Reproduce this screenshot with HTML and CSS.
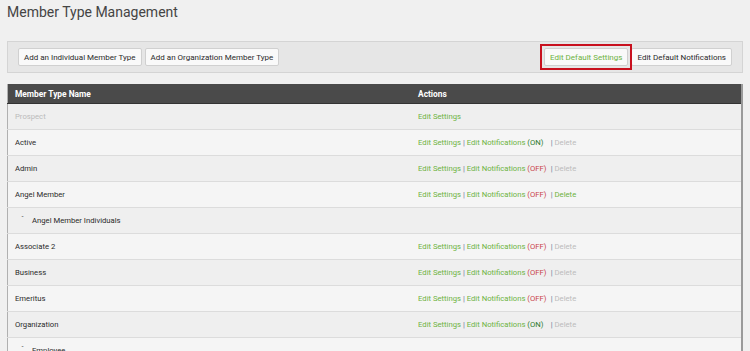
FILE: index.html
```html
<!DOCTYPE html>
<html lang="en">
<head>
    <meta charset="UTF-8">
    <meta name="viewport" content="width=device-width, initial-scale=1.0">
    <title>Member Type Management</title>
    <link rel="stylesheet" href="styles.css">
</head>
<body>
    <h1>Member Type Management</h1>
    <div class="toolbar">
        <div class="toolbar-left">
            <button class="btn">Add an Individual Member Type</button>
            <button class="btn">Add an Organization Member Type</button>
        </div>
        <div class="toolbar-right">
            <button class="btn btn-green highlight">Edit Default Settings</button>
            <button class="btn">Edit Default Notifications</button>
        </div>
    </div>

    <table class="types">
        <thead>
            <tr>
                <th class="col-name">Member Type Name</th>
                <th>Actions</th>
            </tr>
        </thead>
        <tbody>
            <tr>
                <td class="muted">Prospect</td>
                <td><a class="link">Edit Settings</a></td>
            </tr>
            <tr>
                <td>Active</td>
                <td><a class="link">Edit Settings</a> <span class="sep">|</span> <span class="notif"><a class="link">Edit Notifications</a> <span class="on">(ON)</span></span><span class="sep">|</span> <span class="disabled">Delete</span></td>
            </tr>
            <tr>
                <td>Admin</td>
                <td><a class="link">Edit Settings</a> <span class="sep">|</span> <span class="notif"><a class="link">Edit Notifications</a> <span class="off">(OFF)</span></span><span class="sep">|</span> <span class="disabled">Delete</span></td>
            </tr>
            <tr>
                <td>Angel Member</td>
                <td><a class="link">Edit Settings</a> <span class="sep">|</span> <span class="notif"><a class="link">Edit Notifications</a> <span class="off">(OFF)</span></span><span class="sep">|</span> <a class="link">Delete</a></td>
            </tr>
            <tr>
                <td class="child"><span class="caret">ˇ</span>Angel Member Individuals</td>
                <td></td>
            </tr>
            <tr>
                <td>Associate 2</td>
                <td><a class="link">Edit Settings</a> <span class="sep">|</span> <span class="notif"><a class="link">Edit Notifications</a> <span class="off">(OFF)</span></span><span class="sep">|</span> <span class="disabled">Delete</span></td>
            </tr>
            <tr>
                <td>Business</td>
                <td><a class="link">Edit Settings</a> <span class="sep">|</span> <span class="notif"><a class="link">Edit Notifications</a> <span class="off">(OFF)</span></span><span class="sep">|</span> <span class="disabled">Delete</span></td>
            </tr>
            <tr>
                <td>Emeritus</td>
                <td><a class="link">Edit Settings</a> <span class="sep">|</span> <span class="notif"><a class="link">Edit Notifications</a> <span class="off">(OFF)</span></span><span class="sep">|</span> <span class="disabled">Delete</span></td>
            </tr>
            <tr>
                <td>Organization</td>
                <td><a class="link">Edit Settings</a> <span class="sep">|</span> <span class="notif"><a class="link">Edit Notifications</a> <span class="on">(ON)</span></span><span class="sep">|</span> <span class="disabled">Delete</span></td>
            </tr>
            <tr>
                <td class="child"><span class="caret">ˇ</span>Employee</td>
                <td></td>
            </tr>
        </tbody>
    </table>
</body>
</html>
```

FILE: styles.css
```css
body {
    margin: 0;
    padding: 0 7px;
    background-color: #f0f0f0;
    font-family: Roboto, "Liberation Sans", Arial, sans-serif;
    font-size: 7.7px;
    color: #2a2a2a;
}
h1 {
    margin: 0;
    padding-top: 4px;
    height: 37px;
    font-size: 14px;
    font-weight: normal;
    color: #444;
}
.toolbar {
    display: flex;
    justify-content: space-between;
    align-items: center;
    height: 30px;
    padding: 0 10px;
    background-color: #e6e6e6;
    border: 1px solid #d4d4d4;
}
.toolbar-left,
.toolbar-right {
    display: flex;
    gap: 3px;
}
.btn {
    height: 18px;
    padding: 0 5px;
    background-color: #f9f9f9;
    border: 1px solid #d0d0d0;
    border-radius: 2px;
    font-family: inherit;
    font-size: 8px;
    color: #2a2a2a;
    cursor: pointer;
}
.btn-green {
    color: #6db33f;
}
/* red annotation box drawn over the button */
.highlight {
    position: relative;
}
.highlight::after {
    content: "";
    position: absolute;
    top: -5px;
    right: -5px;
    bottom: -5px;
    left: -5px;
    border: 2px solid #c8101e;
}
.types {
    width: 100%;
    margin-top: 11px;
    border-collapse: collapse;
    border-left: 1px solid #b0b0b0;
    border-right: 2px solid #9a9a9a;
}
.types th {
    height: 19px;
    padding: 0 7px;
    background-color: #4a4a4a;
    color: #fff;
    font-weight: bold;
    font-size: 8.4px;
    text-align: left;
    border-bottom: 1px solid #333;
}
.types .col-name {
    width: 389px;
}
.types td {
    height: 25px;
    padding: 0 7px;
    border-bottom: 1px solid #dcdcdc;
    background-color: #efefef;
    white-space: nowrap;
}
.types tbody tr:nth-child(even) td {
    background-color: #f5f5f5;
}
.types .muted {
    color: #bbb;
}
.types .child {
    padding-left: 13px;
}
.caret {
    display: inline-block;
    width: 11px;
    color: #555;
    font-size: 7px;
    vertical-align: top;
}
.link {
    color: #6db33f;
    text-decoration: none;
    cursor: pointer;
}
.sep {
    color: #6a7399;
}
.notif {
    display: inline-block;
    width: 84px;
}
.on {
    color: #2b7a2b;
}
.off {
    color: #c9424a;
}
.disabled {
    color: #bcbcbc;
}
```
